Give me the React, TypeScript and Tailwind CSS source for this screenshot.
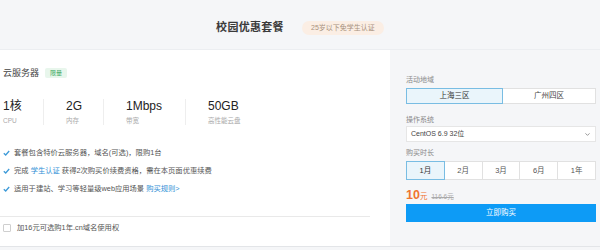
import { ChevronDown } from "lucide-react";

const specs = [
  { value: "1核", label: "CPU", w: "w-[40px]" },
  { value: "2G", label: "内存", w: "w-[60px]" },
  { value: "1Mbps", label: "带宽", w: "w-[82px]" },
  { value: "50GB", label: "高性能云盘", w: "w-[90px]" },
];

const months = ["1月", "2月", "3月", "6月", "1年"];

function Check() {
  return (
    <svg width="7" height="6" viewBox="0 0 7 6" className="shrink-0">
      <polyline points="0.8,3.2 2.7,5 6.2,1" fill="none" stroke="#3d9ad8" strokeWidth="1.3" />
    </svg>
  );
}

export default function App() {
  return (
    <div className="w-[600px] h-[250px] bg-[#f5f6f8] text-[#333] font-['Liberation_Sans','Noto_Sans_CJK_SC',sans-serif] overflow-hidden">
      {/* Header */}
      <div className="h-[50px] flex items-center justify-center gap-[18px] border-b border-[#eceef1] pt-[6px]">
        <h1 className="text-[11px] font-bold text-[#3a3a3a] tracking-[0.3px]">校园优惠套餐</h1>
        <span className="h-[14px] w-[82px] rounded-full bg-[#fbeee4] text-[#a8917d] text-[7px] leading-[14px] text-center">
          25岁以下免学生认证
        </span>
      </div>

      <div className="flex h-[197px] border-b border-[#e3e5e8]">
        {/* Left panel */}
        <div className="w-[390px] bg-white pl-[3px]">
          <div className="mt-[17px] h-[12px] flex items-center gap-[6px]">
            <span className="text-[9px] leading-[12px] text-[#444]">云服务器</span>
            <span className="h-[10px] px-[5px] rounded-[2px] bg-[#e8f6ec] text-[#3aa862] text-[6px] leading-[10px]">限量</span>
          </div>

          <div className="mt-[20px] flex">
            {specs.map((s, i) => (
              <div
                key={s.label}
                className={`${s.w} ${i > 0 ? "pl-[22px]" : ""} ${i > 0 ? "border-l border-[#eeeeee]" : ""} h-[26px] flex flex-col`}
              >
                <span className="text-[12px] leading-[15px] text-[#222]">{s.value}</span>
                <span className="mt-[2px] text-[6.5px] leading-[9px] text-[#aaa]">{s.label}</span>
              </div>
            ))}
          </div>

          <div className="mt-[19px] text-[7.3px] text-[#555]">
            <div className="h-[18px] flex items-center gap-[4px]">
              <Check />
              <span>套餐包含特价云服务器，域名(可选)，限购1台</span>
            </div>
            <div className="h-[18px] flex items-center gap-[4px]">
              <Check />
              <span>
                完成 <span className="text-[#2f8fd6]">学生认证</span> 获得2次购买价续费资格，需在本页面优惠续费
              </span>
            </div>
            <div className="h-[18px] flex items-center gap-[4px]">
              <Check />
              <span>
                适用于建站、学习等轻量级web应用场景 <span className="text-[#2f8fd6]">购买规则&gt;</span>
              </span>
            </div>
          </div>

          <div className="mt-[18px] mr-[20px] -ml-[3px] h-px bg-[#e9e9e9]" />

          <div className="mt-[5px] h-[12px] flex items-center gap-[6px]">
            <span className="w-[8px] h-[8px] border border-[#cfcfcf] rounded-[1px] bg-white" />
            <span className="text-[7.3px] text-[#555]">加16元可选购1年.cn域名使用权</span>
          </div>
        </div>

        {/* Right panel */}
        <div className="flex-1 pl-[16px] pr-[4px] text-[7px]">
          <div className="mt-[25px] h-[10px] leading-[10px] text-[#888]">活动地域</div>
          <div className="mt-[3px] flex h-[16px]">
            <div className="w-[97px] flex items-center justify-center bg-[#eaf5fb] border border-[#79bde3] text-[#333] text-[7.5px]">上海三区</div>
            <div className="flex-1 flex items-center justify-center bg-white border border-l-0 border-[#e1e1e1] text-[#444] text-[7.5px]">广州四区</div>
          </div>

          <div className="mt-[11px] h-[10px] leading-[10px] text-[#888]">操作系统</div>
          <div className="mt-[1px] h-[16px] flex items-center justify-between bg-white border border-[#e6e6e6] pl-[4px] pr-[4px] text-[#444]">
            <span>CentOS 6.9 32位</span>
            <ChevronDown size={7} strokeWidth={3} className="text-[#888]" />
          </div>

          <div className="mt-[6px] h-[10px] leading-[10px] text-[#888]">购买时长</div>
          <div className="mt-[3px] flex h-[19px]">
            {months.map((m, i) => (
              <div
                key={m}
                className={`flex-1 flex items-center justify-center text-[7.5px] ${
                  i === 0
                    ? "bg-[#eaf5fb] border border-[#79bde3] text-[#333]"
                    : "bg-white border border-l-0 border-[#e1e1e1] text-[#555]"
                }`}
              >
                {m}
              </div>
            ))}
          </div>

          <div className="mt-[6px] h-[14px] flex items-baseline gap-[4px]">
            <span className="text-[#f0742f] font-bold">
              <span className="text-[12.5px]">10</span>
              <span className="text-[7.5px] font-normal">元</span>
            </span>
            <span className="text-[#aaa] line-through text-[6.5px]">116.6元</span>
          </div>

          <div className="mt-[4px] h-[18px] flex items-center justify-center bg-[#0d9bf6] text-white text-[7.5px]">
            立即购买
          </div>
        </div>
      </div>
    </div>
  );
}
